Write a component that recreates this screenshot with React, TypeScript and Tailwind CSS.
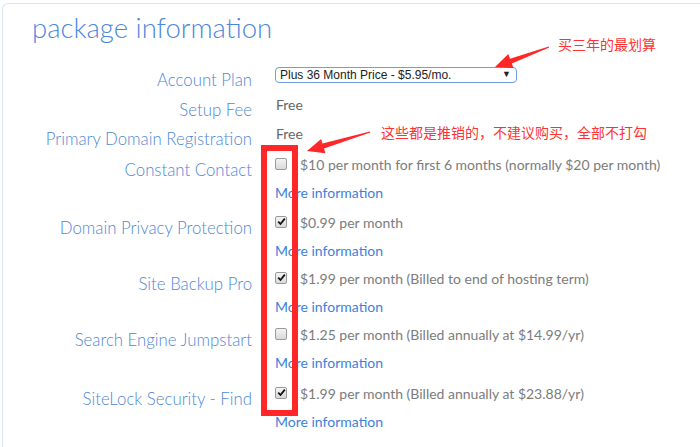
const options = [
  { label: "Constant Contact", price: "$10 per month for first 6 months (normally $20 per month)", checked: false, h: "h-[58px]" },
  { label: "Domain Privacy Protection", price: "$0.99 per month", checked: true, h: "h-[56px]" },
  { label: "Site Backup Pro", price: "$1.99 per month (Billed to end of hosting term)", checked: true, h: "h-[56px]" },
  { label: "Search Engine Jumpstart", price: "$1.25 per month (Billed annually at $14.99/yr)", checked: false, h: "h-[59px]" },
  { label: "SiteLock Security - Find", price: "$1.99 per month (Billed annually at $23.88/yr)", checked: true, h: "h-[59px]" },
];

// 截图工具风格的红色箭头
function arrowPoints(tx: number, ty: number, hx: number, hy: number) {
  const dx = hx - tx;
  const dy = hy - ty;
  const len = Math.hypot(dx, dy);
  const ux = dx / len;
  const uy = dy / len;
  const nx = -uy;
  const ny = ux;
  const bx = hx - ux * 17;
  const by = hy - uy * 17;
  const p = (x: number, y: number, k: number) => `${(x + nx * k).toFixed(1)},${(y + ny * k).toFixed(1)}`;
  return [p(tx, ty, 0.6), p(bx, by, 2.6), p(bx, by, 7.5), `${hx},${hy}`, p(bx, by, -7.5), p(bx, by, -2.6), p(tx, ty, -0.6)].join(" ");
}

function Checkbox({ checked }: { checked: boolean }) {
  return (
    <span className="flex h-[12px] w-[12px] items-center justify-center rounded-[2px] border border-[#9a9a9a] bg-gradient-to-b from-[#f4f4f4] to-[#d9d9d9]">
      {checked && (
        <svg width="9" height="9" viewBox="0 0 9 9">
          <path d="M1.2 4.6 L3.5 7 L7.8 1.6" fill="none" stroke="#111" strokeWidth="1.8" />
        </svg>
      )}
    </span>
  );
}

function Label({ children, pt }: { children: string; pt: string }) {
  return (
    <div className={`w-[249px] shrink-0 text-right text-[16.8px] font-light leading-[30px] text-[#4f88d4] ${pt}`}>{children}</div>
  );
}

export default function App() {
  return (
    <div className="relative h-[447px] w-[700px] overflow-hidden bg-white font-['Lato','Noto_Sans_CJK_SC',sans-serif]">
      {/* 面板 */}
      <div className="ml-[2px] mt-[3px] h-[460px] w-[720px] rounded-tl-[6px] border-l border-t border-[#d8e5f5]">
        <h1 className="mt-[7px] pl-[29px] text-[27.5px] font-light leading-[34px] text-[#4c88da]">package information</h1>

        <div className="mt-[15px]">
          {/* Account Plan */}
          <div className="flex h-[30px]">
            <Label pt="pt-[5px]">Account Plan</Label>
            <div className="ml-[23px] flex items-center">
              <div className="flex h-[16px] w-[242px] items-center justify-between rounded-[4px] border border-[#6f9fdc] pl-[4px] pr-[5px] font-['Liberation_Sans',sans-serif] text-[12px] text-[#222]">
                <span>Plus 36 Month Price - $5.95/mo.</span>
                <span className="text-[9px]">▼</span>
              </div>
            </div>
          </div>

          <div className="flex h-[29px]">
            <Label pt="pt-[5px]">Setup Fee</Label>
            <div className="ml-[24px] text-[14px] leading-[30px] text-[#666]">Free</div>
          </div>

          <div className="flex h-[30px]">
            <Label pt="pt-[5px]">Primary Domain Registration</Label>
            <div className="ml-[24px] text-[14px] leading-[30px] text-[#666]">Free</div>
          </div>

          {options.map((o) => (
            <div key={o.label} className={`flex ${o.h}`}>
              <Label pt="pt-[6px]">{o.label}</Label>
              <div className="ml-[23px]">
                <div className="flex h-[30px] items-center">
                  <span className="-mt-[1px]">
                    <Checkbox checked={o.checked} />
                  </span>
                  <span className="ml-[13px] text-[14px] text-[#7c7c7c]">{o.price}</span>
                </div>
                <a className="block text-[14px] leading-[28px] text-[#3e80da]">More information</a>
              </div>
            </div>
          ))}
        </div>
      </div>

      {/* 标注 */}
      <div className="absolute left-[261px] top-[145px] h-[271px] w-[37px] border-[6px] border-[#ff2727]" />
      <div className="absolute left-[558px] top-[34px] font-['Noto_Sans_CJK_SC',sans-serif] text-[14px] text-[#ff3232]">买三年的最划算</div>
      <div className="absolute left-[381px] top-[122px] font-['Noto_Sans_CJK_SC',sans-serif] text-[14px] text-[#ff3232]">
        这些都是推销的，不建议购买，全部不打勾
      </div>
      <svg className="absolute left-0 top-0" width="700" height="447">
        <polygon points={arrowPoints(549, 47, 495, 67)} fill="#ff2727" />
        <polygon points={arrowPoints(370, 132, 307, 151)} fill="#ff2727" />
      </svg>
    </div>
  );
}
